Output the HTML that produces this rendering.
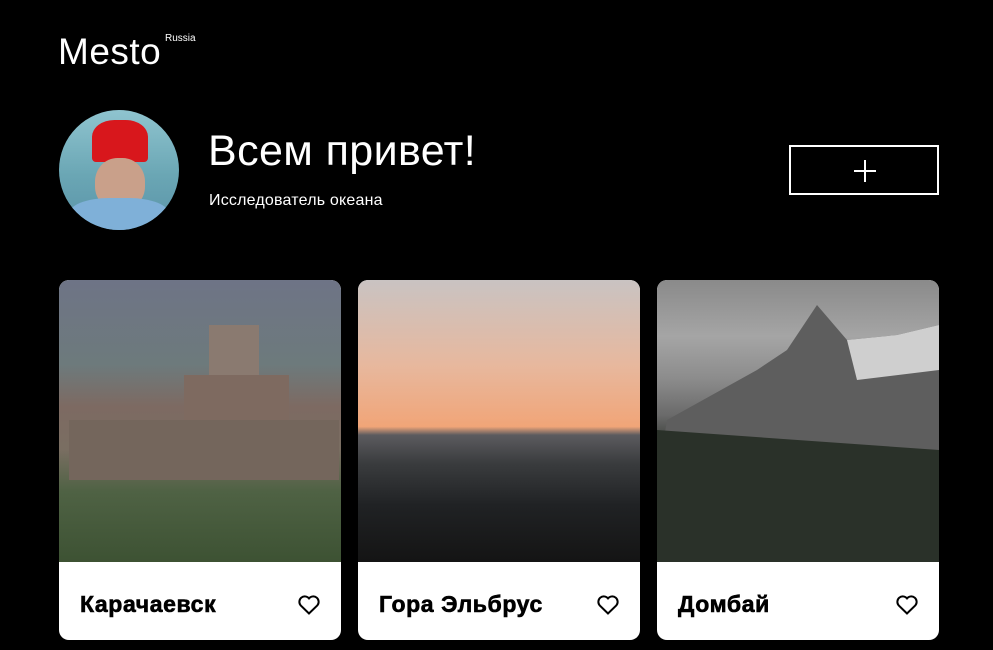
<!DOCTYPE html>
<html><head><meta charset="utf-8"><style>
*{margin:0;padding:0;box-sizing:border-box}
body{width:993px;height:650px;background:#000;overflow:hidden;font-family:"Liberation Sans",sans-serif;color:#fff;position:relative}
.logo{position:absolute;left:58px;top:32px;font-size:37px;line-height:40px;letter-spacing:0.5px}
.ru{position:absolute;left:165px;top:33px;font-size:10px}
.ava{position:absolute;left:59px;top:110px;width:120px;height:120px;border-radius:50%;overflow:hidden;background:linear-gradient(#8fc4cf,#6aa6b4 55%,#5a93a8)}
h1{position:absolute;left:208px;top:127px;font-size:43px;font-weight:normal;line-height:48px;letter-spacing:0.4px}
.sub{position:absolute;left:209px;top:192px;font-size:16px;letter-spacing:0.2px}
.add{position:absolute;left:789px;top:145px;width:150px;height:50px;border:2px solid #fff}
.add:before,.add:after{content:"";position:absolute;background:#fff;left:63px;top:23px;width:22px;height:2px}
.add:after{left:73px;top:13px;width:2px;height:22px}
.card{position:absolute;top:280px;width:282px;height:360px;background:#fff;border-radius:10px;overflow:hidden}
.img{height:282px;position:relative}
.card p{position:absolute;left:21px;top:311px;font-size:23px;font-weight:bold;color:#000;letter-spacing:0.6px;-webkit-text-stroke:0.6px #000}
.card svg.h{position:absolute;left:239px;top:315px}
</style></head><body>
<div class="logo">Mesto</div><div class="ru">Russia</div>
<div class="ava">
<div style="position:absolute;left:33px;top:10px;width:56px;height:42px;background:#d8171c;border-radius:40% 40% 4px 4px"></div>
<div style="position:absolute;left:36px;top:48px;width:50px;height:52px;background:#c9a08a;border-radius:45%"></div>
<div style="position:absolute;left:10px;top:88px;width:100px;height:40px;background:#7fb0d8;border-radius:40% 40% 0 0"></div>
</div>
<h1>Всем привет!</h1>
<div class="sub">Исследователь океана</div>
<div class="add"></div>

<div class="card" style="left:59px"><div class="img" style="background:linear-gradient(#6e7486 0%,#6d7a7c 30%,#7d6a62 45%,#7a6e62 60%,#4f6244 75%,#3d5233 100%)">
<div style="position:absolute;left:150px;top:45px;width:50px;height:50px;background:#8a7a70"></div>
<div style="position:absolute;left:125px;top:95px;width:105px;height:90px;background:#7e6a60"></div>
<div style="position:absolute;left:10px;top:140px;width:270px;height:60px;background:#74665c"></div>
</div><p>Карачаевск</p>
<svg class="h" width="22" height="20" viewBox="0 0 22 20"><path d="M11 18.5L2.6 10.3A5 5 0 0 1 11 3.4a5 5 0 0 1 8.4 6.9Z" fill="none" stroke="#000" stroke-width="2"/></svg></div>

<div class="card" style="left:358px"><div class="img" style="background:linear-gradient(#c9c3c2 0%,#e7b89e 30%,#f1a578 52%,#5c5b5f 55%,#3a3c3e 65%,#202224 80%,#141414 100%)"></div><p>Гора Эльбрус</p>
<svg class="h" width="22" height="20" viewBox="0 0 22 20"><path d="M11 18.5L2.6 10.3A5 5 0 0 1 11 3.4a5 5 0 0 1 8.4 6.9Z" fill="none" stroke="#000" stroke-width="2"/></svg></div>

<div class="card" style="left:657px"><div class="img" style="background:linear-gradient(#8a8a8a 0%,#a5a5a5 20%,#8c8c8c 35%,#6a6a6a 48%,#2f342e 60%,#262b24 80%,#3b3128 100%)">
<svg width="282" height="282" style="position:absolute;left:0;top:0"><path d="M10 140 L100 90 L130 70 L160 25 L190 60 L240 55 L282 45 L282 180 L0 200Z" fill="#5e5e5e"/><path d="M190 60 L240 55 L282 45 L282 90 L200 100Z" fill="#cfcfcf"/><path d="M0 150 L282 170 L282 282 L0 282Z" fill="#2a3129"/></svg>
</div><p>Домбай</p>
<svg class="h" width="22" height="20" viewBox="0 0 22 20"><path d="M11 18.5L2.6 10.3A5 5 0 0 1 11 3.4a5 5 0 0 1 8.4 6.9Z" fill="none" stroke="#000" stroke-width="2"/></svg></div>
</body></html>
